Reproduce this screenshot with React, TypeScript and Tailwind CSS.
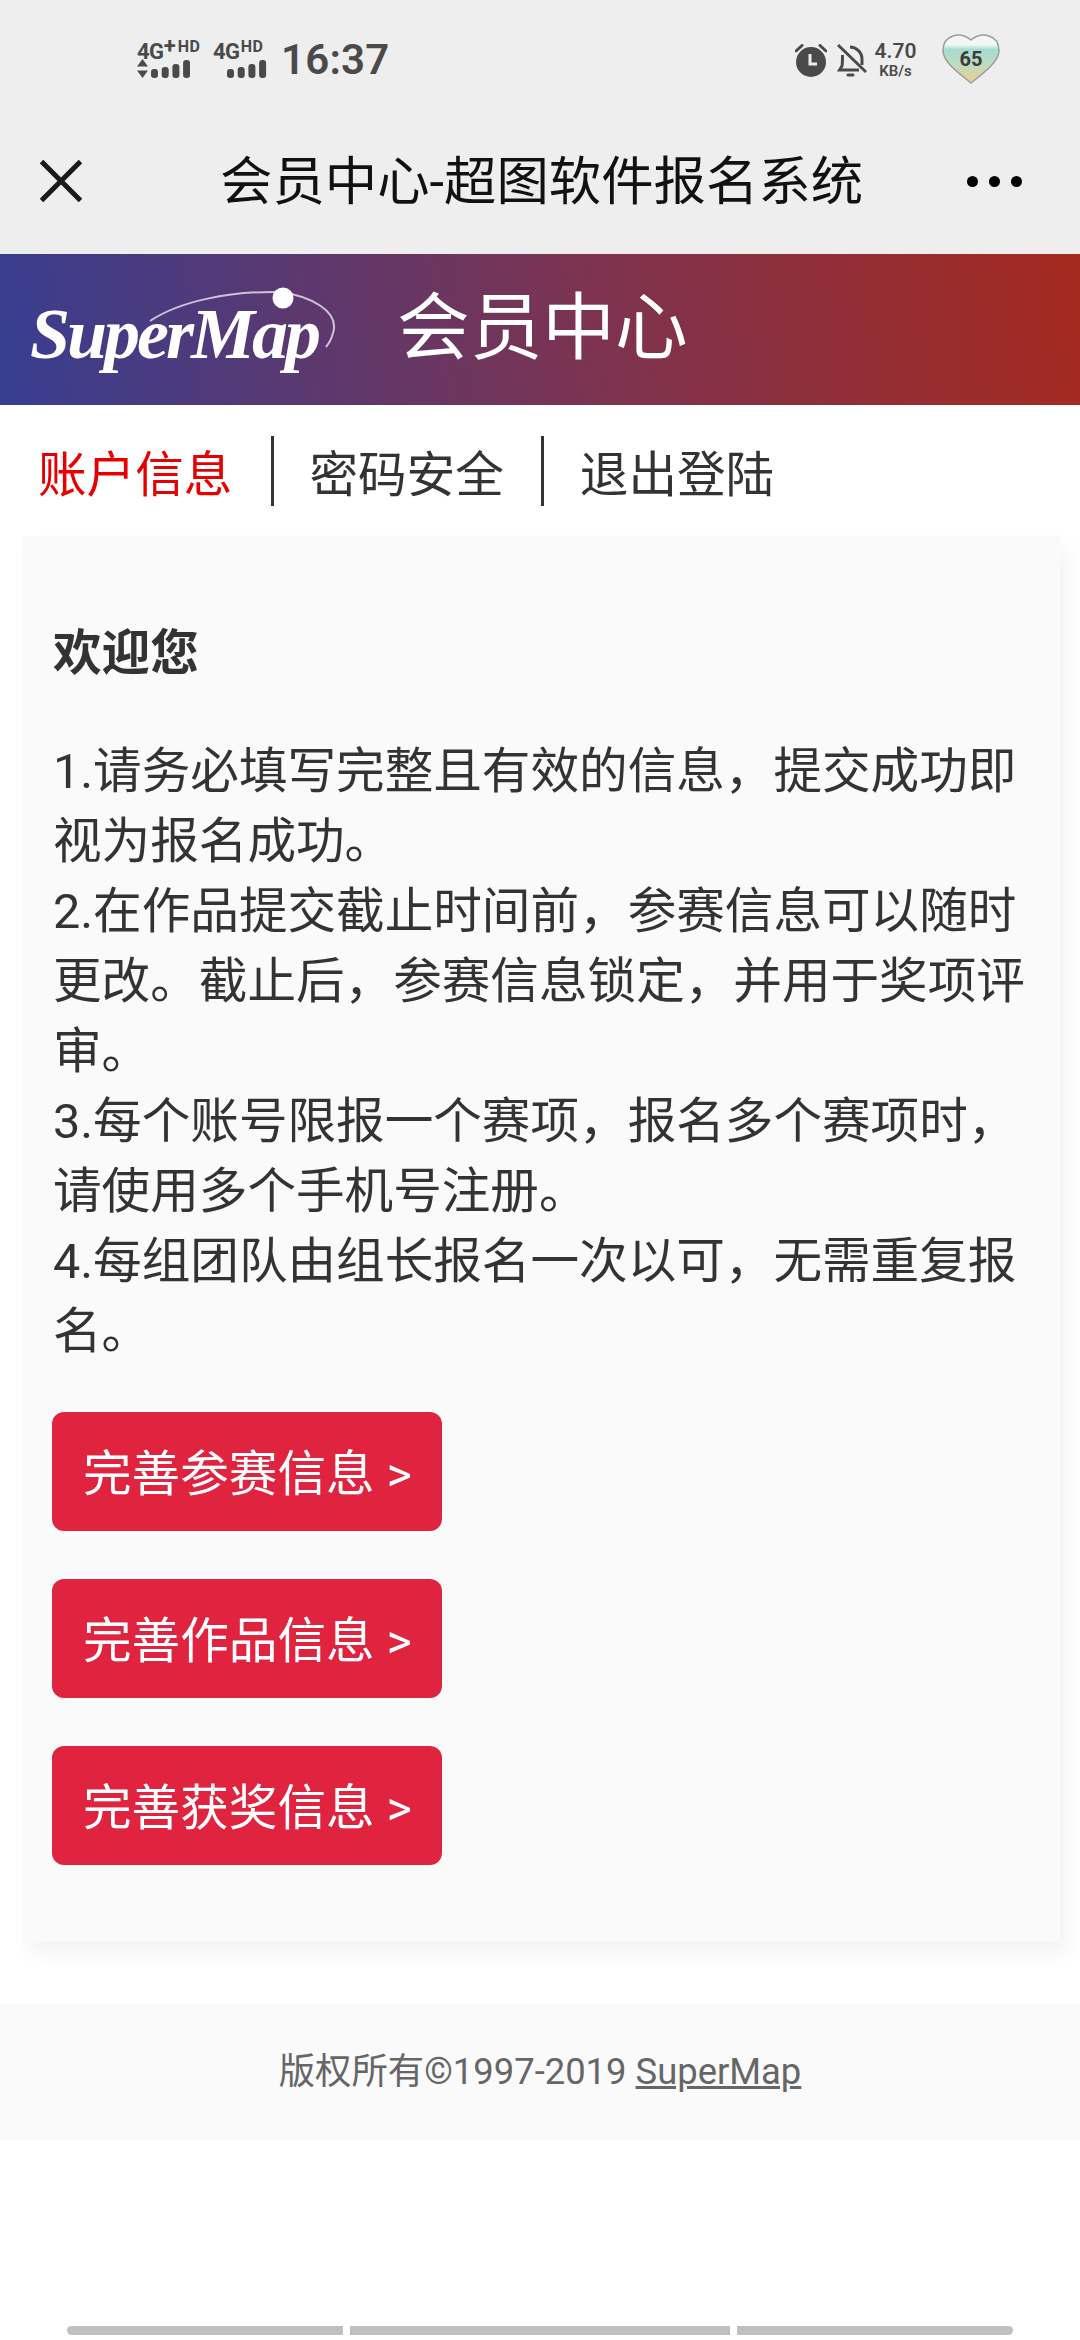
import React from "react";

function Bars({ arrows }: { arrows?: boolean }) {
  return (
    <svg width={arrows ? 53 : 40} height="19" viewBox={arrows ? "0 0 53 19" : "0 0 40 19"} fill="#4a4a4a">
      {arrows && <path d="M5.5 0 L11 7.5 H0 Z M5.5 19 L0 11.5 H11 Z" />}
      {[9, 11, 14, 18].map((h, i) => (
        <rect key={i} x={(arrows ? 14 : 0) + i * 10.7} y={19 - h} width="7" height={h} rx="3" />
      ))}
    </svg>
  );
}

function Heart() {
  return (
    <div className="relative w-[58px] h-[50px]">
      <svg width="58" height="50" viewBox="0 0 58 50">
        <defs>
          <linearGradient id="hg" x1="0" y1="0" x2="0" y2="1">
            <stop offset="0" stopColor="#f2f8f5" />
            <stop offset="0.2" stopColor="#f0f8f6" />
            <stop offset="0.3" stopColor="#a6dcd0" />
            <stop offset="0.6" stopColor="#bcdcc0" />
            <stop offset="1" stopColor="#efcf8e" />
          </linearGradient>
        </defs>
        <path d="M29 6 C24 2 17 0 11 2 C4 4 1 10 1 17 C1 28 18 40 29 49 C40 40 57 28 57 17 C57 10 54 4 47 2 C41 0 34 2 29 6 Z" fill="url(#hg)" stroke="#9c9c9c" strokeWidth="1.5" />
      </svg>
      <span className="absolute inset-0 flex items-center justify-center pb-[1px] text-[20px] font-bold text-[#3a3a3a] font-['Roboto',sans-serif]">65</span>
    </div>
  );
}

function StatusBar() {
  return (
    <div className="h-[120px] flex items-center pl-[137px] pr-[80px] text-[#4a4a4a] font-['Roboto',sans-serif]">
      <div className="flex flex-col w-[76px] mt-[-2px]">
        <div className="flex items-start font-bold leading-none h-[17px]">
          <span className="text-[22px] tracking-[-0.5px]">4G</span>
          <span className="text-[22px] mt-[-6px]">+</span>
          <span className="text-[16px] ml-[2px] mt-[-2px] tracking-[0.5px]">HD</span>
        </div>
        <div className="mt-[1px]"><Bars arrows /></div>
      </div>
      <div className="flex flex-col w-[54px] mt-[-2px]">
        <div className="flex items-start font-bold leading-none h-[17px]">
          <span className="text-[22px] tracking-[-0.5px]">4G</span>
          <span className="text-[16px] ml-[1px] mt-[-2px] tracking-[0.5px]">HD</span>
        </div>
        <div className="mt-[1px] self-end"><Bars /></div>
      </div>
      <span className="ml-[14px] text-[42px] font-semibold tracking-[0.2px] leading-none">16:37</span>
      <div className="flex-1" />
      <svg width="32" height="33" viewBox="0 0 32 33" fill="#4a4a4a">
        <circle cx="16" cy="18" r="15" />
        <path d="M1 7 L7 1.5 M31 7 L25 1.5" stroke="#4a4a4a" strokeWidth="3" strokeLinecap="round" />
        <path d="M15 10 V20 H22" stroke="#ededed" strokeWidth="3" fill="none" />
      </svg>
      <svg className="ml-[10px]" width="30" height="33" viewBox="0 0 30 33" fill="none" stroke="#4a4a4a" strokeWidth="3">
        <path d="M5.5 11 C5.5 13 5.5 20 5 22 L2.5 26 H22 M13 3 C19 3 25 8 25 15 V21" />
        <path d="M1 1 L29 28" />
        <path d="M11 31 H16" strokeLinecap="round" />
      </svg>
      <div className="ml-[9px] w-[39px] flex flex-col items-center leading-none">
        <span className="text-[21px] font-semibold">4.70</span>
        <span className="text-[15px] mt-[2px] font-semibold">KB/s</span>
      </div>
      <div className="ml-[27px] mb-[2px]"><Heart /></div>
    </div>
  );
}

function NavBar() {
  return (
    <div className="h-[134px] pb-[12px] flex items-center pl-[40px] pr-[58px]">
      <svg width="42" height="42" viewBox="0 0 42 42" stroke="#1a1a1a" strokeWidth="5" strokeLinecap="butt">
        <path d="M1.5 1.5 L40.5 40.5 M40.5 1.5 L1.5 40.5" />
      </svg>
      <span className="text-[52.4px] text-[#111] leading-none ml-[138px] mt-[3px]">会员中心-超图软件报名系统</span>
      <div className="flex gap-[11px] ml-auto">
        <span className="w-[11px] h-[11px] rounded-full bg-black" />
        <span className="w-[11px] h-[11px] rounded-full bg-black" />
        <span className="w-[11px] h-[11px] rounded-full bg-black" />
      </div>
    </div>
  );
}

function Logo() {
  return (
    <div className="relative w-[310px] h-[110px] ml-[30px] mb-[8px]">
      <span className="absolute left-0 top-[27px] text-[72px] italic font-bold leading-none text-white font-['Liberation_Serif',serif] tracking-[-3px] whitespace-nowrap">SuperMap</span>
      <svg className="absolute left-0 top-0" width="310" height="110" viewBox="0 0 310 110" fill="none">
        <path d="M120 50 C150 30 200 20 250 21 C280 25 310 40 303 62 Q301 70 296 76" stroke="#ffffff" strokeOpacity="0.7" strokeWidth="2" />
        <circle cx="253" cy="27" r="10.5" fill="#fff" />
      </svg>
    </div>
  );
}

function CTA({ children }: { children: React.ReactNode }) {
  return (
    <div className="w-[390px] h-[119px] rounded-[12px] bg-[#e02440] text-white text-[48.6px] flex items-center pl-[31px] pt-[8px] leading-none whitespace-nowrap">
      {children}
    </div>
  );
}

export default function App() {
  return (
    <div className="w-[1080px] h-[2340px] bg-white relative overflow-hidden font-['Roboto','Noto_Sans_CJK_SC',sans-serif]">
      <div className="bg-[#eeeeee] h-[254px]">
        <StatusBar />
        <NavBar />
      </div>
      <div className="h-[151px] flex items-center bg-[linear-gradient(82deg,#373e91_0%,#7d3350_55%,#a52a1f_100%)]">
        <Logo />
        <span className="ml-[57px] text-[72.7px] text-white leading-none">会员中心</span>
      </div>
      <div className="h-[131px] flex items-center text-[48.6px] leading-none text-[#333]">
        <span className="ml-[38px] mt-[12px] text-[#e60000]">账户信息</span>
        <span className="ml-[39px] w-[3px] h-[70px] bg-[#333]" />
        <span className="ml-[35px] mt-[12px]">密码安全</span>
        <span className="ml-[37px] w-[3px] h-[70px] bg-[#333]" />
        <span className="ml-[36px] mt-[12px]">退出登陆</span>
      </div>
      <div className="ml-[22px] w-[1038px] h-[1406px] bg-[#fafafa] shadow-[8px_12px_20px_rgba(0,0,0,0.05)] px-[31px] pt-[83px]">
        <h2 className="text-[48.6px] font-bold text-[#333] leading-[70px]">欢迎您</h2>
        <p className="mt-[48px] text-[48.6px] leading-[70px] text-[#333]">
          1.请务必填写完整且有效的信息，提交成功即视为报名成功。<br />
          2.在作品提交截止时间前，参赛信息可以随时更改。截止后，参赛信息锁定，并用于奖项评审。<br />
          3.每个账号限报一个赛项，报名多个赛项时，请使用多个手机号注册。<br />
          4.每组团队由组长报名一次以可，无需重复报名。
        </p>
        <div className="mt-[45px] ml-[-1px] flex flex-col gap-[48px]">
          <CTA>完善参赛信息 &gt;</CTA>
          <CTA>完善作品信息 &gt;</CTA>
          <CTA>完善获奖信息 &gt;</CTA>
        </div>
      </div>
      <div className="mt-[62px] h-[136px] bg-[#fafafa] flex items-center justify-center text-[36.4px] text-[#666] leading-none">
        <span>版权所有©1997-2019 <span className="underline">SuperMap</span></span>
      </div>
      <div className="absolute left-[67px] top-[2326px] flex gap-[7px] h-[9px]">
        <div className="w-[276px] bg-[#c0c0c0] rounded-l-full" />
        <div className="w-[380px] bg-[#c0c0c0]" />
        <div className="w-[276px] bg-[#c0c0c0] rounded-r-full" />
      </div>
    </div>
  );
}
